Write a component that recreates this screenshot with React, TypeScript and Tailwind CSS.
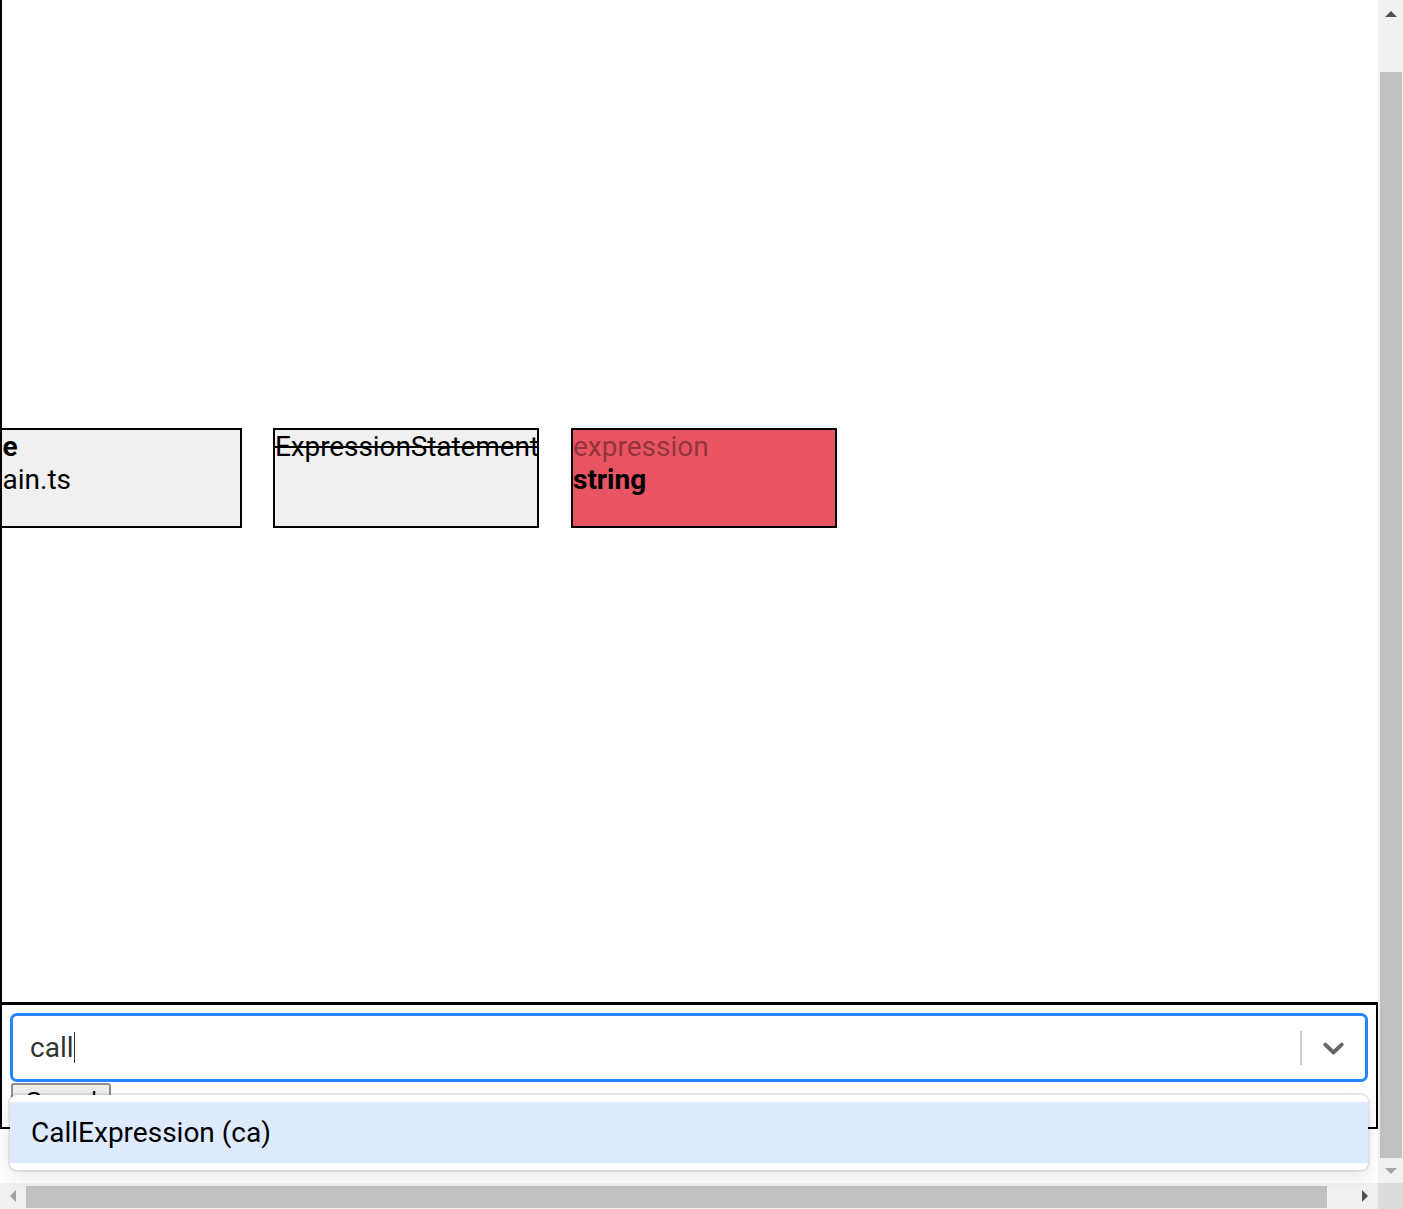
import React from 'react';

// Tree node shown on the canvas
function NodeBox({
  pos,
  bg,
  children,
}: {
  pos: string;
  bg: string;
  children: React.ReactNode;
}) {
  return (
    <div
      className={`absolute top-[428px] w-[266px] h-[100px] border-2 border-black overflow-hidden text-[28px] leading-[33px] whitespace-nowrap ${pos} ${bg}`}
    >
      {children}
    </div>
  );
}

function ChevronDown() {
  return (
    <svg width="35" height="35" viewBox="0 0 20 20" className="fill-[#666666]">
      <path d="M4.516 7.548c0.436-0.446 1.043-0.481 1.576 0l3.908 3.747 3.908-3.747c0.533-0.481 1.141-0.446 1.574 0 0.436 0.445 0.408 1.197 0 1.615-0.406 0.418-4.695 4.502-4.695 4.502-0.217 0.223-0.502 0.335-0.787 0.335s-0.57-0.112-0.789-0.335c0 0-4.287-4.084-4.695-4.502s-0.436-1.17 0-1.615z" />
    </svg>
  );
}

export default function App() {
  return (
    <div className="w-screen h-screen overflow-hidden flex flex-col bg-white font-['Roboto',sans-serif] text-black">
      <div className="flex flex-1 min-h-0">
        {/* page */}
        <div className="flex-1 flex flex-col min-w-0">
          {/* canvas */}
          <div className="relative h-[1002px] shrink-0 overflow-hidden border-l-2 border-black">
            <NodeBox pos="left-[-26px]" bg="bg-[#f0f0f0]">
              <div className="font-bold">file</div>
              <div>main.ts</div>
            </NodeBox>
            <NodeBox pos="left-[271px]" bg="bg-[#f0f0f0]">
              <div className="line-through tracking-[-0.1px]">ExpressionStatement</div>
            </NodeBox>
            <NodeBox pos="left-[569px]" bg="bg-[#e85462]">
              <div className="text-black/40">expression</div>
              <div className="font-bold">string</div>
            </NodeBox>
          </div>

          {/* bottom panel */}
          <div className="border-2 border-t-[3px] border-black px-2 pt-2 pb-[7px]">
            <div className="relative">
              <div className="h-[69px] flex items-center border-[3px] border-[#2684ff] rounded-[7px] bg-white">
                <div className="flex-1 flex items-center pl-[17px] text-[28px] text-[#333333]">
                  <span>call</span>
                  <span className="w-px h-[31px] bg-[#333333]" />
                </div>
                <span className="w-[2px] h-[34px] bg-[#cccccc]" />
                <div className="px-[14px] flex items-center">
                  <ChevronDown />
                </div>
              </div>

              <button className="ml-px mt-px h-[37px] px-[12px] border-2 border-[#8f8f8f] rounded-[3px] bg-[#efefef] text-[23px] leading-[27px] font-['Liberation_Sans',Arial,sans-serif] text-black">
                Cancel
              </button>

              {/* dropdown menu */}
              <div className="absolute left-0 right-0 top-[82px] bg-white rounded-[7px] py-[7px] shadow-[0_0_0_2px_rgba(0,0,0,0.08),0_7px_19px_rgba(0,0,0,0.1)]">
                <div className="bg-[#deebff] px-[21px] py-[14px] text-[28px] leading-[33px]">
                  CallExpression (ca)
                </div>
              </div>
            </div>
          </div>
          <div className="flex-1" />
        </div>

        {/* vertical scrollbar */}
        <div className="w-[25px] shrink-0 flex flex-col bg-[#f1f1f1]">
          <div className="h-[28px] flex items-center justify-center">
            <svg width="12" height="6" viewBox="0 0 12 6">
              <path d="M6 0L12 6H0z" fill="#505050" />
            </svg>
          </div>
          <div className="flex-1 flex flex-col pt-[44px] pl-[2px] pr-px">
            <div className="flex-1 bg-[#c1c1c1]" />
          </div>
          <div className="h-[25px] flex items-center justify-center">
            <svg width="12" height="6" viewBox="0 0 12 6">
              <path d="M0 0H12L6 6z" fill="#a3a3a3" />
            </svg>
          </div>
        </div>
      </div>

      {/* horizontal scrollbar */}
      <div className="h-[26px] shrink-0 flex">
        <div className="flex-1 flex bg-[#f1f1f1]">
          <div className="w-[26px] flex items-center justify-center">
            <svg width="6" height="12" viewBox="0 0 6 12">
              <path d="M6 0V12L0 6z" fill="#a3a3a3" />
            </svg>
          </div>
          <div className="w-[1301px] pt-[3px] pb-px">
            <div className="h-full bg-[#c1c1c1]" />
          </div>
          <div className="flex-1" />
          <div className="w-[26px] flex items-center justify-center">
            <svg width="6" height="12" viewBox="0 0 6 12">
              <path d="M0 0L6 6L0 12z" fill="#505050" />
            </svg>
          </div>
        </div>
        <div className="w-[25px] bg-[#dcdcdc]" />
      </div>
    </div>
  );
}
